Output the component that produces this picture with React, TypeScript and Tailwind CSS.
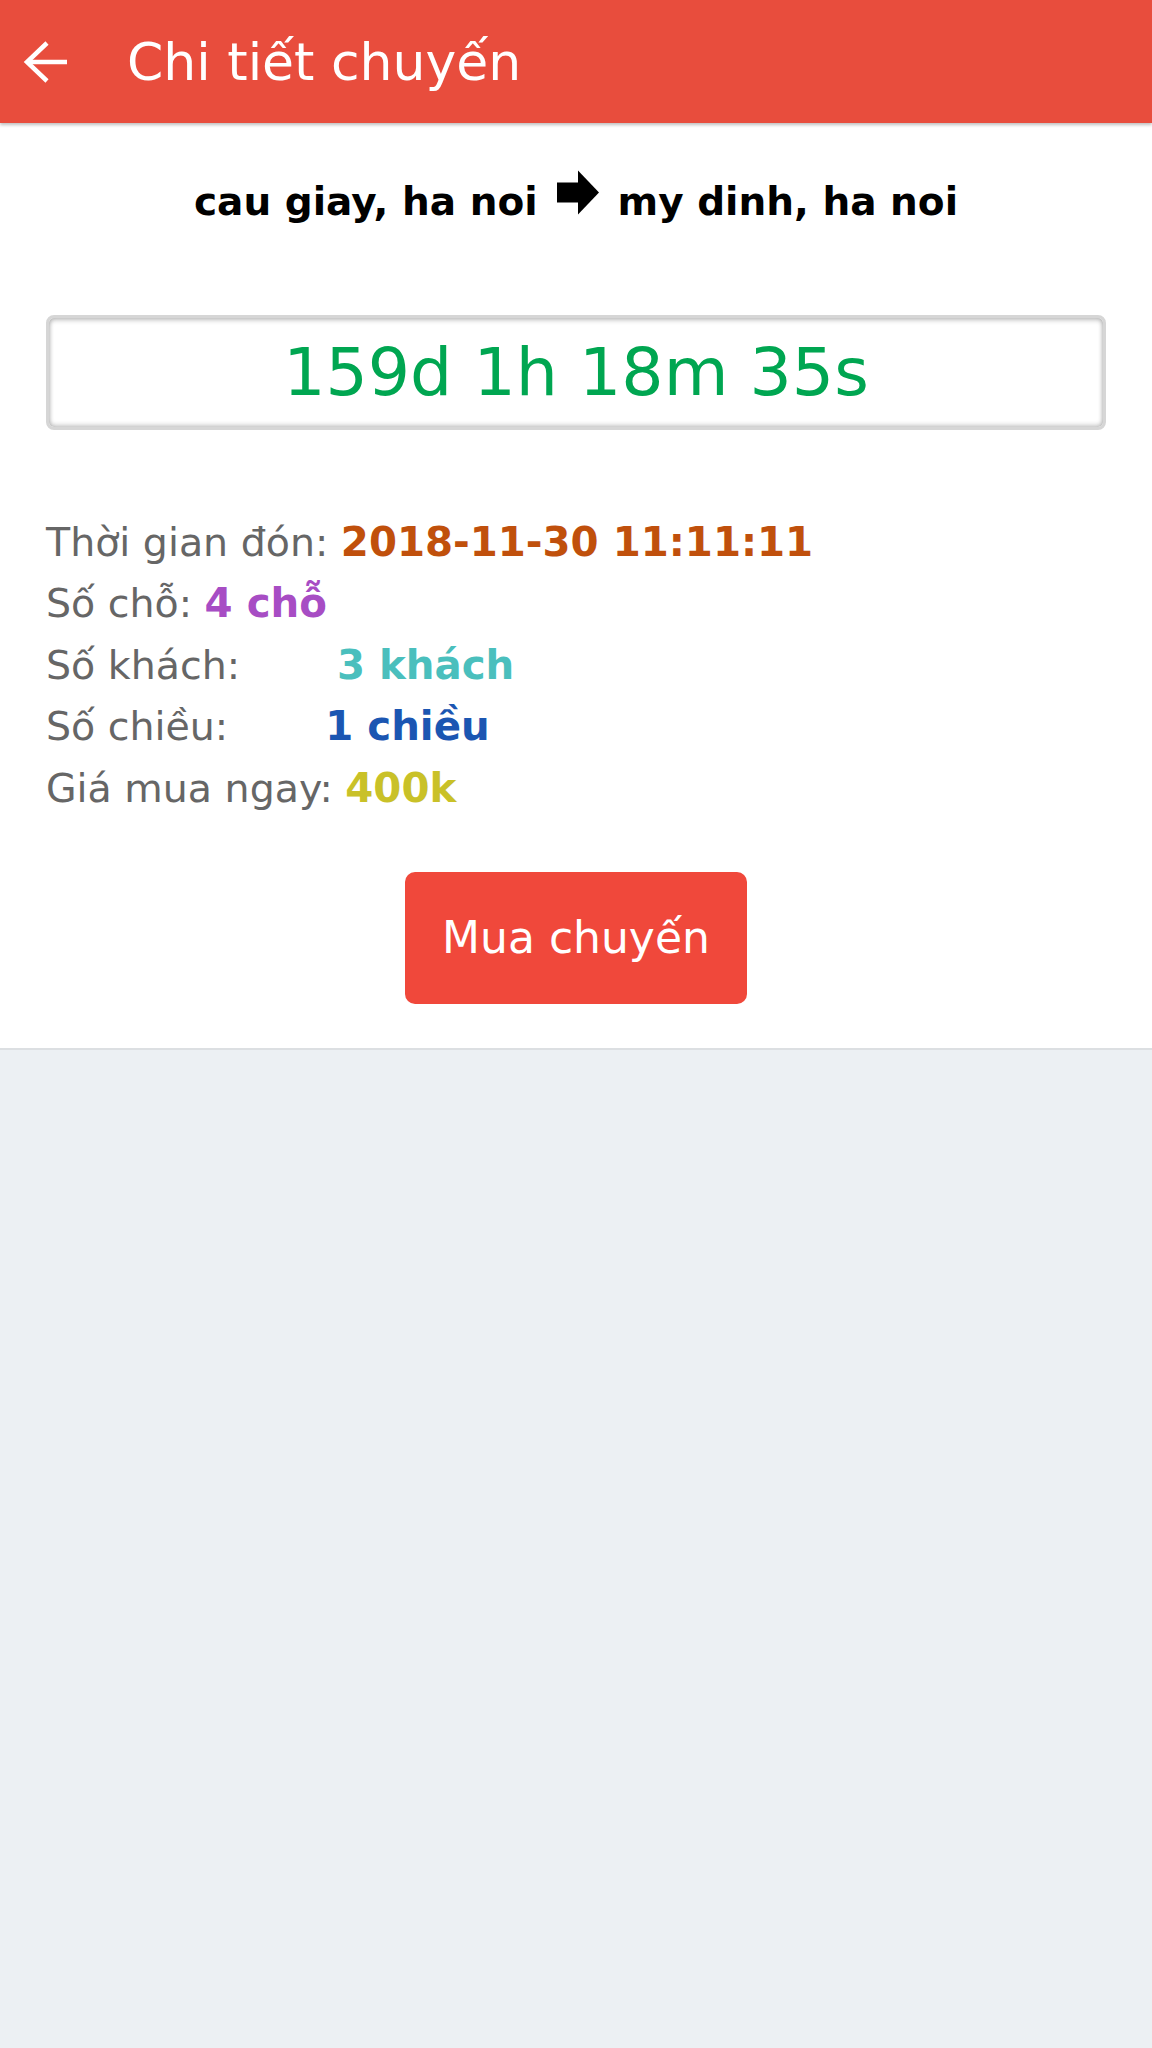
const font = { fontFamily: '"DejaVu Sans", sans-serif' };

const BackArrow = () => (
  <svg width="46" height="44" viewBox="0 0 46 44" fill="none" stroke="white" strokeWidth="4.5">
    <path d="M4 22 H44" />
    <path d="M24 3 L4 22 L24 41" strokeLinejoin="miter" />
  </svg>
);

const RouteArrow = () => (
  <svg width="42" height="45" viewBox="0 0 42 44" className="inline-block mx-[19px] align-middle relative -top-[12px]">
    <rect x="0" y="12" width="22" height="20" fill="black" />
    <polygon points="21,0 42,22 21,44" fill="black" />
  </svg>
);

type Row = { label: string; value: string; color: string; gap?: boolean };

const rows: Row[] = [
  { label: "Thời gian đón:", value: "2018-11-30 11:11:11", color: "text-[#c0500c]" },
  { label: "Số chỗ:", value: "4 chỗ", color: "text-[#a74dc4]" },
  { label: "Số khách:", value: "3 khách", color: "text-[#4abfbd]", gap: true },
  { label: "Số chiều:", value: "1 chiều", color: "text-[#1b56b2]", gap: true },
  { label: "Giá mua ngay:", value: "400k", color: "text-[#c9c128]" },
];

export default function App() {
  return (
    <div className="min-h-[2048px] bg-[#ecf0f3]" style={font}>
      {/* header */}
      <div className="h-[123px] bg-[#e84d3d] flex items-center shadow-[0_2px_3px_rgba(0,0,0,0.25)] relative z-10">
        <div className="w-[127px] pl-[23px] flex items-center">
          <BackArrow />
        </div>
        <h1 className="text-white text-[52px] leading-none">Chi tiết chuyến</h1>
      </div>

      <div className="bg-white border-b-2 border-[#dcdfe2] pb-[44px]">
        <div className="pt-[56px] text-center font-bold text-black text-[39px] leading-[46px]">
          cau giay, ha noi
          <RouteArrow />
          my dinh, ha noi
        </div>

        <div className="mx-[46px] mt-[88px] h-[115px] rounded-lg border-[3px] border-[#d6d6d6] shadow-[inset_0_2px_5px_rgba(0,0,0,0.25),inset_0_-2px_5px_rgba(0,0,0,0.2)] flex items-center justify-center">
          <span className="text-[#00a651] text-[66.5px] leading-none">159d 1h 18m 35s</span>
        </div>

        <div className="mt-[82px] px-[46px] flex flex-col">
          {rows.map((r) => (
            <div key={r.label} className="text-[39.5px] leading-[61.4px] text-[#666666] whitespace-pre">
              {r.label}
              {r.gap ? (
                <span className={`font-bold text-[40.3px] ml-[97px] ${r.color}`}>{r.value}</span>
              ) : (
                <>
                  {" "}
                  <span className={`font-bold text-[40.3px] ${r.color}`}>{r.value}</span>
                </>
              )}
            </div>
          ))}
        </div>

        <div className="mt-[53px] flex justify-center">
          <button className="w-[342px] h-[132px] rounded-[10px] bg-[#f0483b] text-white text-[44px]">
            Mua chuyến
          </button>
        </div>
      </div>
    </div>
  );
}
